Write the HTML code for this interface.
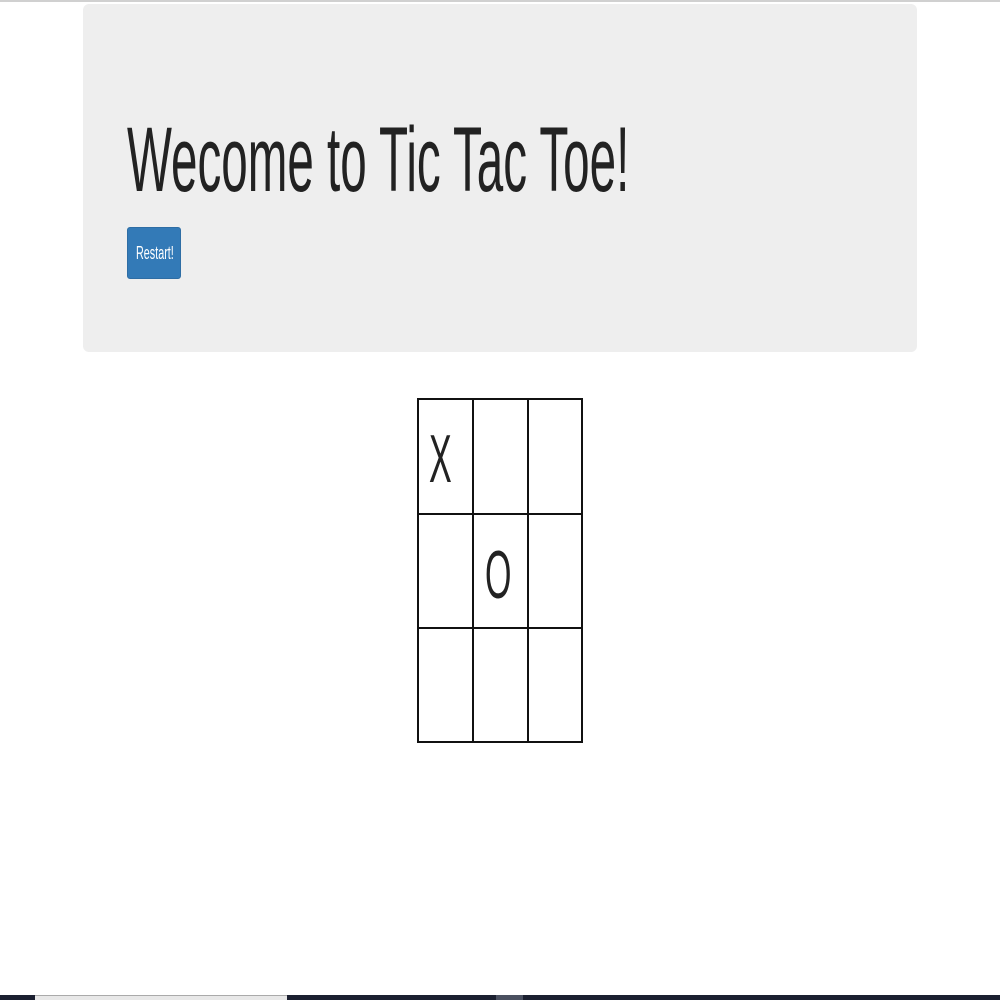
<!DOCTYPE html>
<html><head><style>
html,body{margin:0;padding:0;width:1000px;height:1000px;overflow:hidden;background:#fff;font-family:"Liberation Sans",Arial,sans-serif}
.top{position:absolute;left:0;top:0;width:1000px;height:2px;background:#d0d0d0}
.jumbo{position:absolute;left:83px;top:4px;width:834px;height:348px;background:#eee;border-radius:6px}
.h{position:absolute;left:127px;top:110px;font-size:92px;line-height:100px;color:#222;white-space:nowrap;transform:scaleX(0.517);transform-origin:0 0}
.btn{position:absolute;left:127px;top:227px;width:54px;height:52px;background:#337ab7;border:1px solid #2e6da4;box-sizing:border-box;border-radius:3px}
.btn span{position:absolute;left:8px;top:15px;color:#fff;font-size:18px;line-height:20px;white-space:nowrap;transform:scaleX(0.6);transform-origin:0 0}
.v{position:absolute;background:#111;width:2px}
.hh{position:absolute;background:#111;height:2px}
.c{position:absolute;font-size:68px;line-height:68px;color:#222;transform:scaleX(0.5);transform-origin:0 0}
.bar{position:absolute;left:0;top:995px;width:1000px;height:5px;background:#1b2030}
</style></head><body>
<div class="top"></div>
<div class="jumbo"></div>
<div class="h">Wecome to Tic Tac Toe!</div>
<div class="btn"><span>Restart!</span></div>
<div class="hh" style="left:417px;top:398px;width:166px"></div>
<div class="hh" style="left:417px;top:513px;width:166px"></div>
<div class="hh" style="left:417px;top:627px;width:166px"></div>
<div class="hh" style="left:417px;top:741px;width:166px"></div>
<div class="v" style="left:417px;top:398px;height:345px"></div>
<div class="v" style="left:472px;top:398px;height:345px"></div>
<div class="v" style="left:527px;top:398px;height:345px"></div>
<div class="v" style="left:581px;top:398px;height:345px"></div>
<div class="c" style="left:429px;top:425px">X</div>
<div class="c" style="left:485px;top:541px">O</div>
<div class="bar"></div>
<div style="position:absolute;left:35px;top:995px;width:252px;height:5px;background:#e8e8e8;border-top:1px solid #aaa;box-sizing:border-box"></div>
<div style="position:absolute;left:496px;top:995px;width:27px;height:5px;background:#4a5060"></div>
</body></html>
